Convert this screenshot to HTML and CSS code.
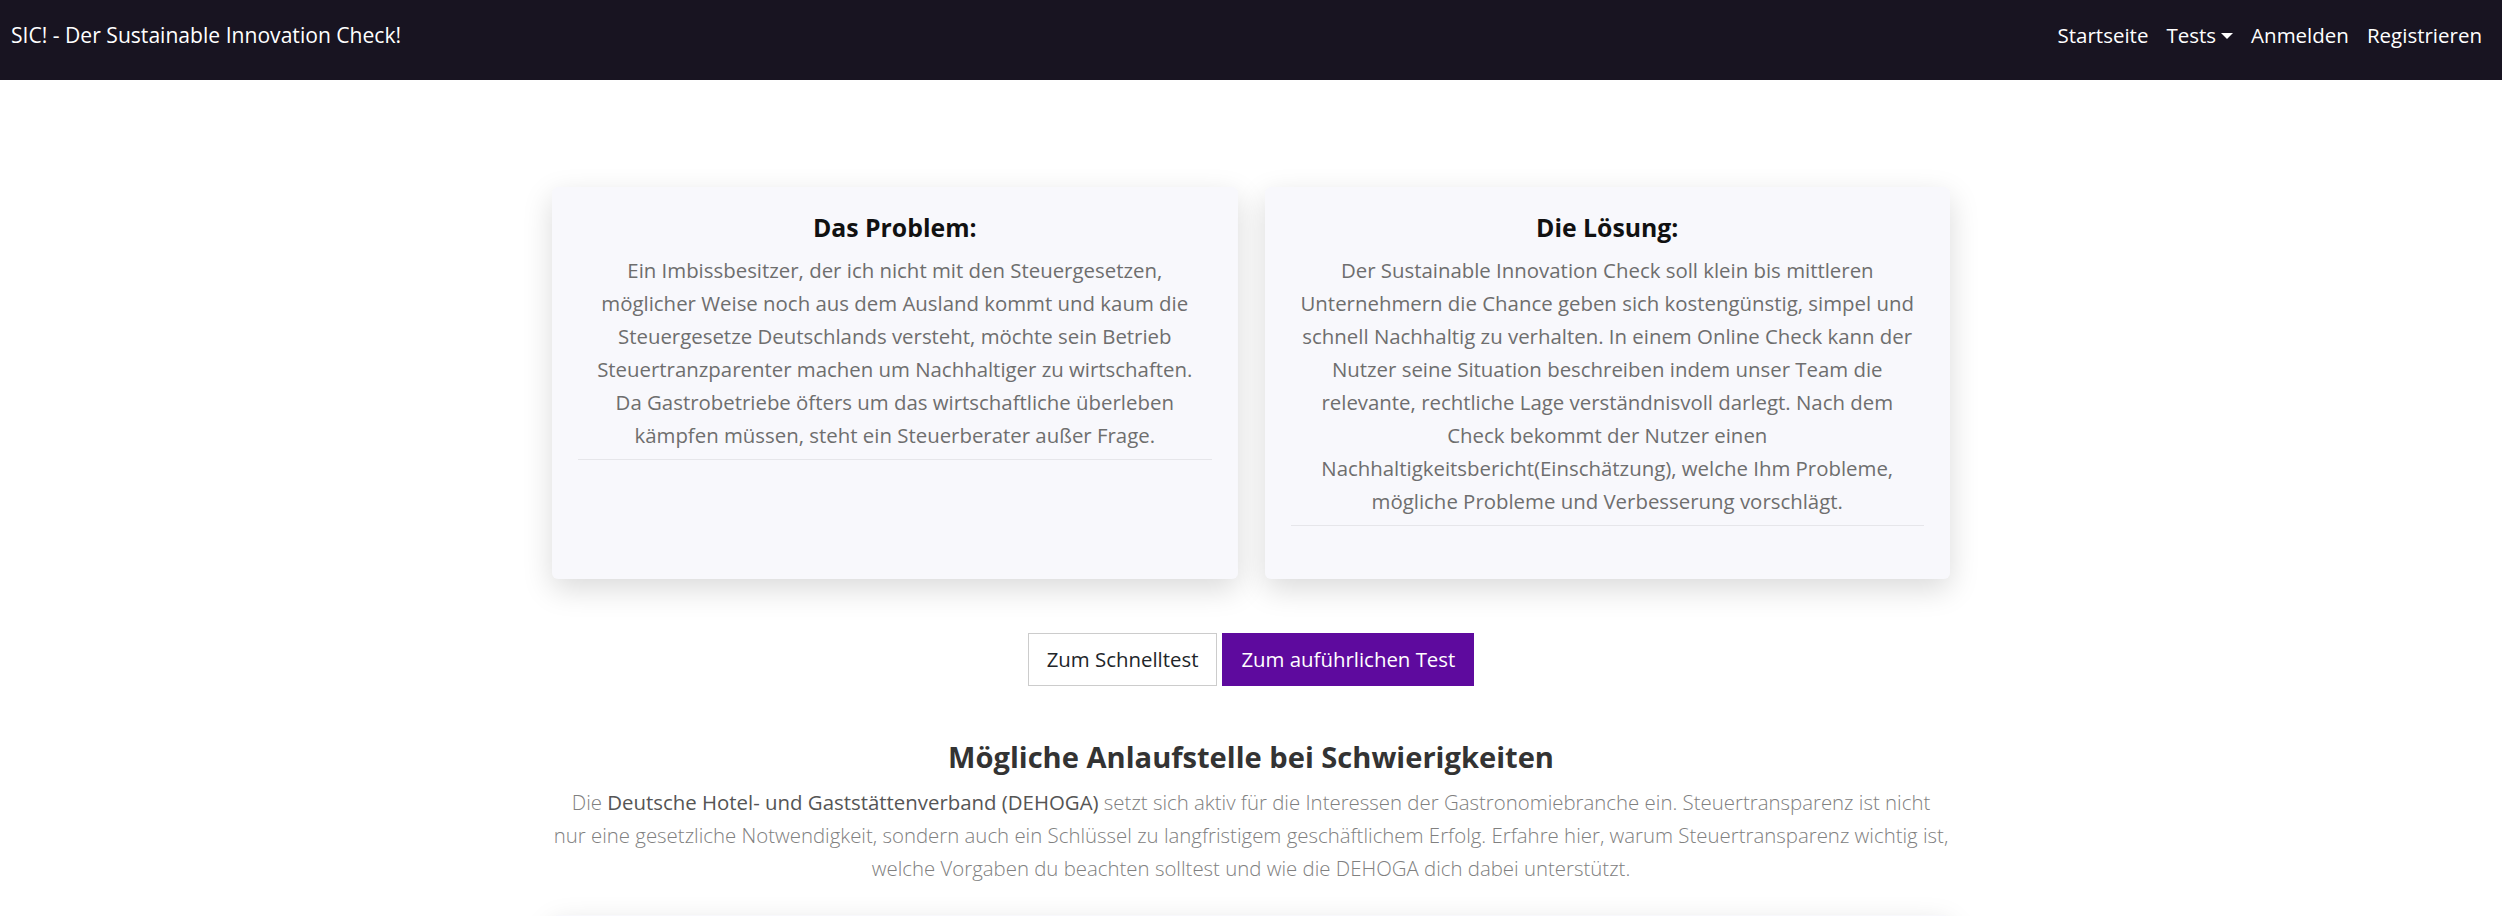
FILE: index.html
```html
<!DOCTYPE html>
<html lang="de">
<head>
<meta charset="utf-8">
<title>SIC!</title>
<link rel="stylesheet" href="styles.css">
</head>
<body>
<nav class="navbar">
  <a class="brand" href="#">SIC! - Der Sustainable Innovation Check!</a>
  <ul class="nav">
    <li><a href="#">Startseite</a></li>
    <li><a href="#" class="dropdown">Tests<span class="caret"></span></a></li>
    <li><a href="#">Anmelden</a></li>
    <li><a href="#">Registrieren</a></li>
  </ul>
</nav>
<main class="container">
  <div class="cards">
    <div class="card">
      <h5 class="card-title">Das Problem:</h5>
      <p class="card-text">Ein Imbissbesitzer, der ich nicht mit den Steuergesetzen,<br>möglicher Weise noch aus dem Ausland kommt und kaum die<br>Steuergesetze Deutschlands versteht, möchte sein Betrieb<br>Steuertranzparenter machen um Nachhaltiger zu wirtschaften.<br>Da Gastrobetriebe öfters um das wirtschaftliche überleben<br>kämpfen müssen, steht ein Steuerberater außer Frage.</p>
      <hr>
    </div>
    <div class="card">
      <h5 class="card-title">Die Lösung:</h5>
      <p class="card-text">Der Sustainable Innovation Check soll klein bis mittleren<br>Unternehmern die Chance geben sich kostengünstig, simpel und<br>schnell Nachhaltig zu verhalten. In einem Online Check kann der<br>Nutzer seine Situation beschreiben indem unser Team die<br>relevante, rechtliche Lage verständnisvoll darlegt. Nach dem<br>Check bekommt der Nutzer einen<br>Nachhaltigkeitsbericht(Einschätzung), welche Ihm Probleme,<br>mögliche Probleme und Verbesserung vorschlägt.</p>
      <hr>
    </div>
  </div>
  <div class="actions">
    <a href="#" class="btn btn-light">Zum Schnelltest</a>
    <a href="#" class="btn btn-purple">Zum auführlichen Test</a>
  </div>
  <section class="info">
    <h2>Mögliche Anlaufstelle bei Schwierigkeiten</h2>
    <p>Die <strong>Deutsche Hotel- und Gaststättenverband (DEHOGA)</strong> setzt sich aktiv für die Interessen der Gastronomiebranche ein. Steuertransparenz ist nicht<br>nur eine gesetzliche Notwendigkeit, sondern auch ein Schlüssel zu langfristigem geschäftlichem Erfolg. Erfahre hier, warum Steuertransparenz wichtig ist,<br>welche Vorgaben du beachten solltest und wie die DEHOGA dich dabei unterstützt.</p>
  </section>
  <div class="card next-card"></div>
</main>
</body>
</html>
```
FILE: styles.css
```css
* { box-sizing: border-box; }
body {
  margin: 0;
  font-family: "Open Sans", "Liberation Sans", sans-serif;
  color: #212529;
  background: #fff;
}
a { text-decoration: none; }
.navbar {
  height: 80px;
  background: #181421;
  display: flex;
  justify-content: space-between;
  align-items: flex-start;
  padding: 20px 11px 0;
}
.brand {
  color: #fff;
  font-size: 21.1px;
  line-height: 30px;
}
.nav {
  list-style: none;
  margin: 0;
  padding: 0;
  display: flex;
}
.nav a {
  display: block;
  color: #fff;
  font-size: 20.5px;
  line-height: 30px;
  padding: 0 9px;
}
.caret {
  display: inline-block;
  margin-left: 5px;
  vertical-align: 4px;
  border-top: 6px solid #fff;
  border-left: 6px solid transparent;
  border-right: 6px solid transparent;
}
.container {
  width: 1398px;
  margin: 0 auto;
  padding-top: 107px;
}
.cards {
  display: flex;
  gap: 27px;
}
.card {
  flex: 1;
  background: #f8f8fc;
  border-radius: 6px;
  box-shadow: 0 10px 30px rgba(0,0,0,0.15);
  padding: 26px 26px 53px;
  text-align: center;
}
.card-title {
  margin: 0 0 12px;
  font-size: 24.8px;
  line-height: 29px;
  font-weight: 700;
  color: #111;
}
.card-text {
  margin: 0;
  font-size: 20.4px;
  line-height: 33px;
  color: #6e6e6e;
}
.card hr {
  margin: 7px 0 0;
  border: 0;
  border-top: 1px solid #e6e6ea;
}
.actions {
  display: flex;
  justify-content: center;
  gap: 5px;
  margin-top: 54px;
}
.btn {
  display: block;
  height: 53px;
  line-height: 51px;
  padding: 0 18px;
  font-size: 20.4px;
  border: 1px solid transparent;
}
.btn-light {
  background: #fff;
  color: #212529;
  border-color: #ccc;
}
.btn-purple {
  background: #5e0a9e;
  color: #fff;
  border-color: #5e0a9e;
}
.info {
  text-align: center;
  margin-top: 53px;
}
.info h2 {
  margin: 0;
  font-size: 29.1px;
  line-height: 36px;
  font-weight: 700;
  color: #333;
}
.info p {
  margin: 11px 0 0;
  font-size: 20.4px;
  line-height: 33px;
  font-weight: 300;
  color: #808080;
}
.info strong {
  font-weight: 400;
  color: #555;
}
.next-card {
  margin-top: 30px;
  height: 200px;
}
```
